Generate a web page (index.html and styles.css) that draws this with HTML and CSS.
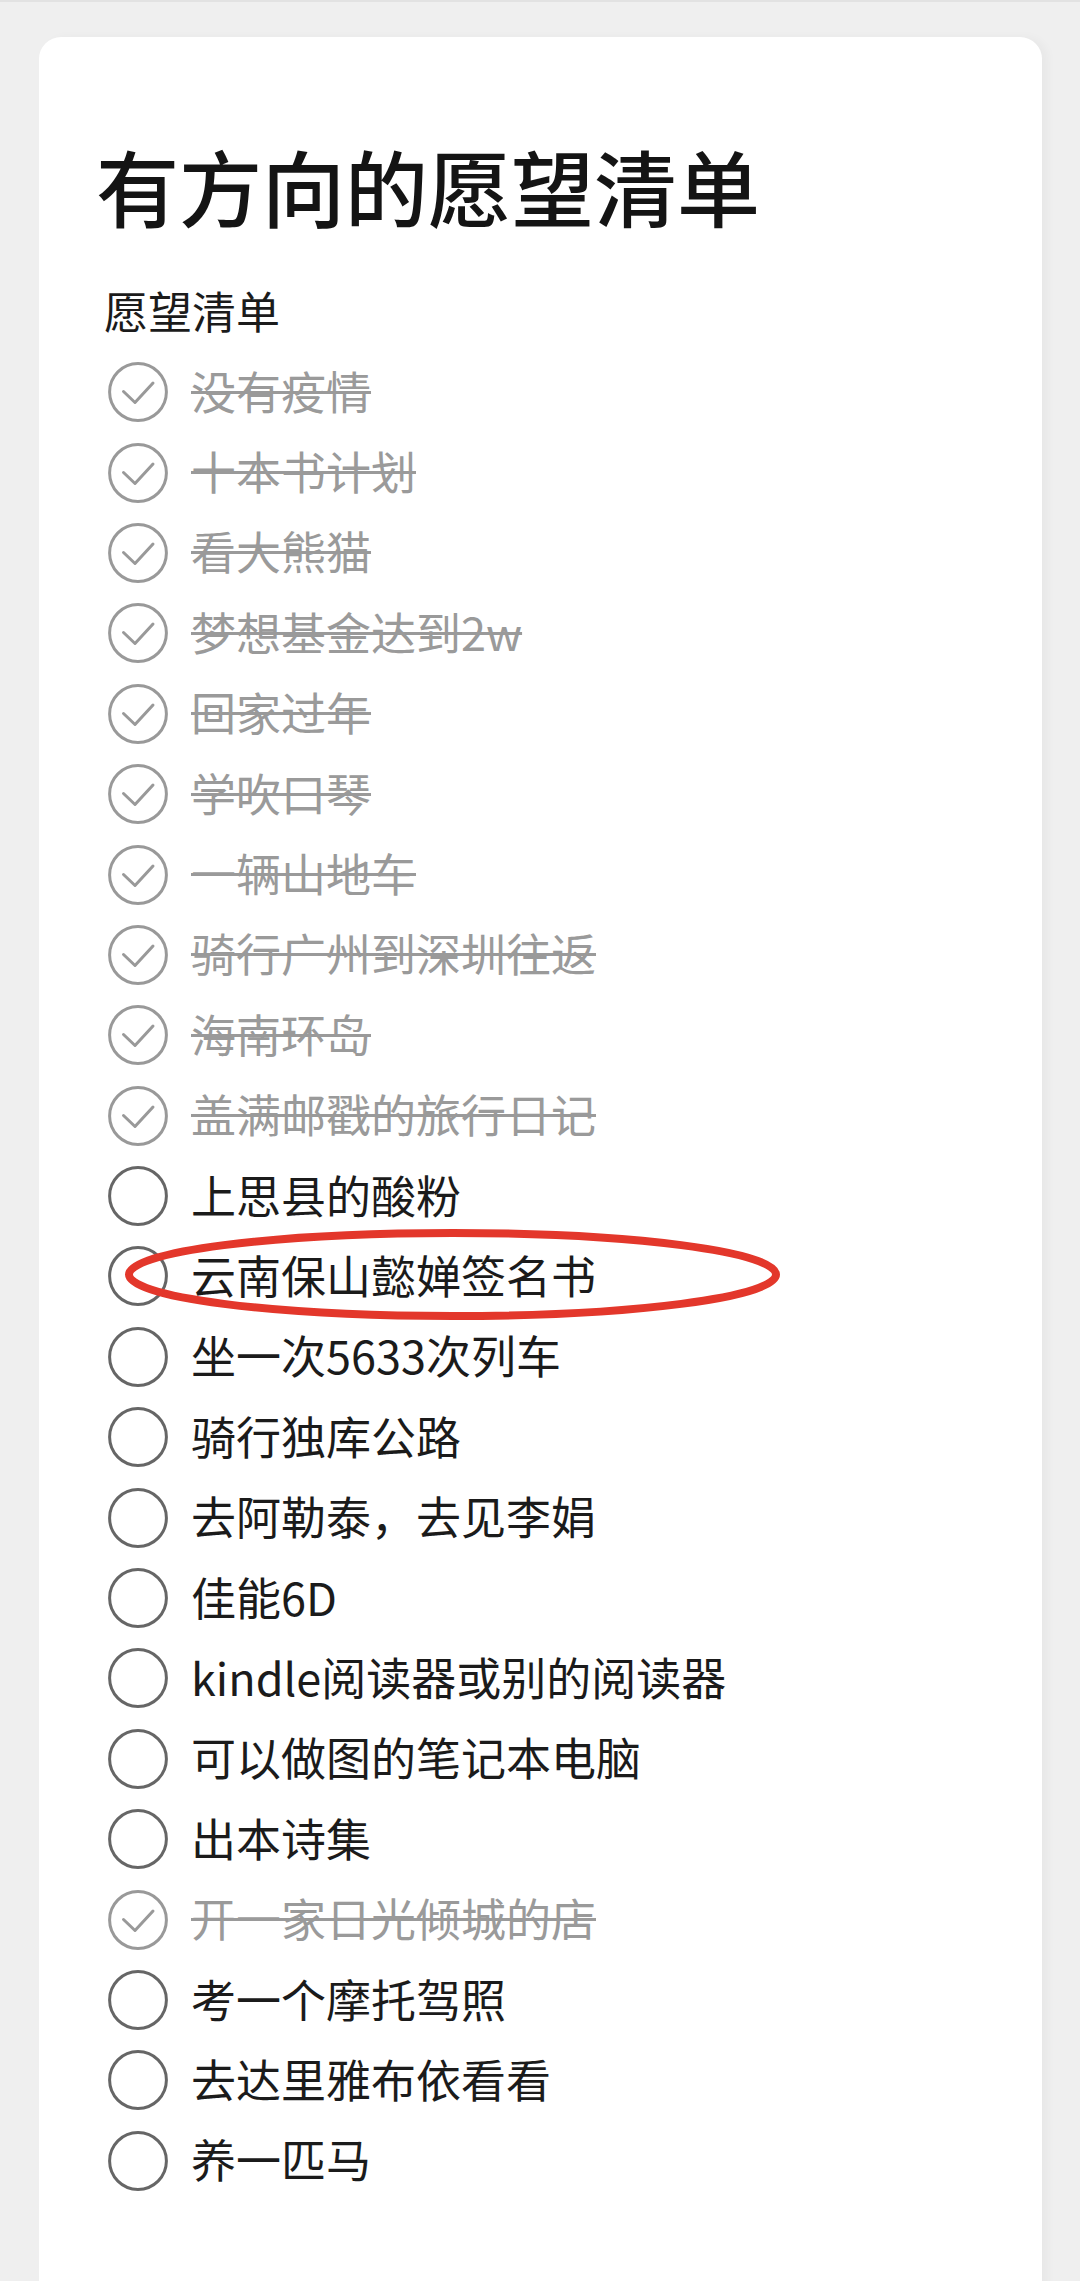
FILE: index.html
```html
<!DOCTYPE html>
<html lang="zh-CN">
<head>
	<title>有方向的愿望清单</title>
	<meta charset="utf-8">
	<link rel="stylesheet" href="styles.css">
	<meta name="viewport" content="width=device-width, initial-scale=1">
</head>

<body>

<svg class="defs" width="0" height="0">
	<symbol id="box_done" viewBox="0 0 60 60">
		<circle cx="30" cy="30" r="28.4" fill="none" stroke="currentColor" stroke-width="3"/>
		<polyline points="15.5,29.5 27,40.5 45,21" fill="none" stroke="currentColor" stroke-width="3" stroke-linecap="round" stroke-linejoin="round"/>
	</symbol>
	<symbol id="box_todo" viewBox="0 0 60 60">
		<circle cx="30" cy="30" r="28.4" fill="none" stroke="currentColor" stroke-width="3"/>
	</symbol>
</svg>

<div id="card">
	<h1 class="title">有方向的愿望清单</h1>
	<div class="subtitle">愿望清单</div>

	<ul class="list">
		<li class="item done"><svg class="box"><use href="#box_done"/></svg><span>没有疫情</span></li>
		<li class="item done"><svg class="box"><use href="#box_done"/></svg><span>十本书计划</span></li>
		<li class="item done"><svg class="box"><use href="#box_done"/></svg><span>看大熊猫</span></li>
		<li class="item done"><svg class="box"><use href="#box_done"/></svg><span>梦想基金达到2w</span></li>
		<li class="item done"><svg class="box"><use href="#box_done"/></svg><span>回家过年</span></li>
		<li class="item done"><svg class="box"><use href="#box_done"/></svg><span>学吹口琴</span></li>
		<li class="item done"><svg class="box"><use href="#box_done"/></svg><span>一辆山地车</span></li>
		<li class="item done"><svg class="box"><use href="#box_done"/></svg><span>骑行广州到深圳往返</span></li>
		<li class="item done"><svg class="box"><use href="#box_done"/></svg><span>海南环岛</span></li>
		<li class="item done"><svg class="box"><use href="#box_done"/></svg><span>盖满邮戳的旅行日记</span></li>
		<li class="item"><svg class="box"><use href="#box_todo"/></svg><span>上思县的酸粉</span></li>
		<li class="item">
			<svg class="box"><use href="#box_todo"/></svg><span>云南保山懿婵签名书</span>
			<!-- red circle drawn over the screenshot -->
			<svg class="mark" viewBox="0 0 655 91"><ellipse cx="327.5" cy="45.5" rx="323.5" ry="41.5"/></svg>
		</li>
		<li class="item"><svg class="box"><use href="#box_todo"/></svg><span>坐一次5633次列车</span></li>
		<li class="item"><svg class="box"><use href="#box_todo"/></svg><span>骑行独库公路</span></li>
		<li class="item"><svg class="box"><use href="#box_todo"/></svg><span>去阿勒泰，去见李娟</span></li>
		<li class="item"><svg class="box"><use href="#box_todo"/></svg><span>佳能6D</span></li>
		<li class="item"><svg class="box"><use href="#box_todo"/></svg><span>kindle阅读器或别的阅读器</span></li>
		<li class="item"><svg class="box"><use href="#box_todo"/></svg><span>可以做图的笔记本电脑</span></li>
		<li class="item"><svg class="box"><use href="#box_todo"/></svg><span>出本诗集</span></li>
		<li class="item done"><svg class="box"><use href="#box_done"/></svg><span>开一家日光倾城的店</span></li>
		<li class="item"><svg class="box"><use href="#box_todo"/></svg><span>考一个摩托驾照</span></li>
		<li class="item"><svg class="box"><use href="#box_todo"/></svg><span>去达里雅布依看看</span></li>
		<li class="item"><svg class="box"><use href="#box_todo"/></svg><span>养一匹马</span></li>
	</ul>
</div>

</body>
</html>
```

FILE: styles.css
```css
body {
	margin: 0;
	background: #efefef;
	border-top: 2px solid #e2e2e2;
	font-family: "Noto Sans CJK SC", "Noto Sans", sans-serif;
	color: #1b1b1b;
	overflow: hidden;
}
.defs{
	position: absolute;
}
#card{
	margin: 35px 38px 0 39px;
	padding: 99px 57px 140px;
	background: #fff;
	border-radius: 22px;
	box-shadow: 6px 0 10px rgba(0,0,0,0.03);
}
.title{
	margin: 0;
	font-size: 83px;
	line-height: 99px;
	font-weight: 500;
	color: #141414;
}
.subtitle{
	margin: 45px 0 0 8px;
	font-size: 44px;
	line-height: 60px;
}
.list{
	list-style: none;
	margin: 12px 0 0;
	padding: 0 0 0 12px;
}
.item{
	position: relative;
	height: 80.4px;
	display: flex;
	align-items: center;
	gap: 23px;
	font-size: 45px;
}
.item span{
	margin-top: -4px;
}
.box{
	width: 60px;
	height: 60px;
	flex-shrink: 0;
	color: #666;
}
.done{
	color: #9a9a9a;
}
.done .box{
	color: #999;
}
.done span{
	text-decoration: line-through;
	text-decoration-thickness: 3px;
}
.mark{
	position: absolute;
	left: 17px;
	top: -7px;
	width: 655px;
	height: 91px;
	overflow: visible;
}
.mark ellipse{
	fill: none;
	stroke: #e3372b;
	stroke-width: 8;
}
```
